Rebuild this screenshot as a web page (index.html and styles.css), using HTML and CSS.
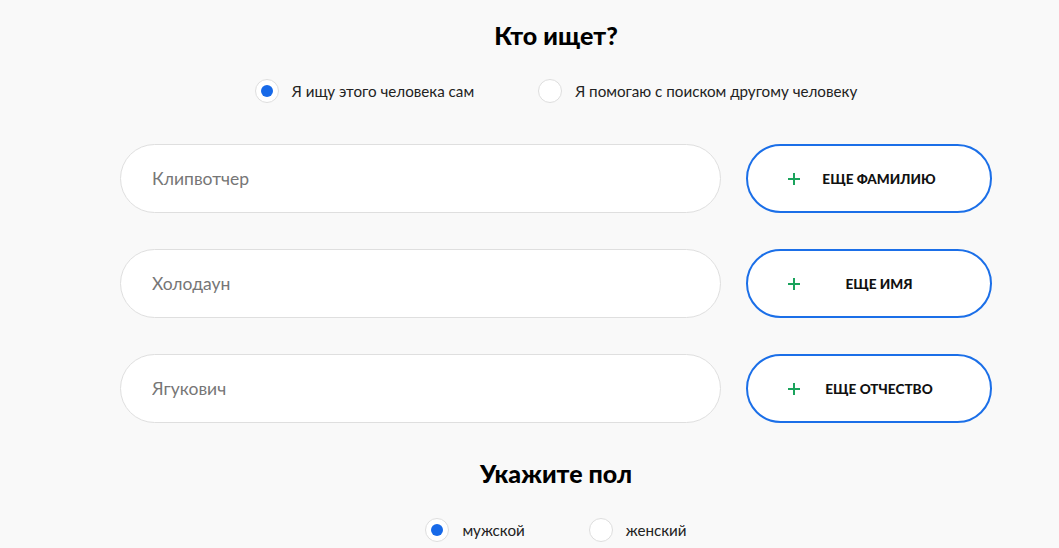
FILE: index.html
```html
<!DOCTYPE html>
<html lang="ru">

<head>
  <meta charset="UTF-8">
  <title>Кто ищет?</title>
  <link rel="stylesheet" href="styles.css">
</head>

<body>

  <div class="form">
    <h2 class="form-title">Кто ищет?</h2>

    <div class="radio-row">
      <label class="radio">
        <span class="radio-mark checked"></span>
        <span>Я ищу этого человека сам</span>
      </label>
      <label class="radio">
        <span class="radio-mark"></span>
        <span>Я помогаю с поиском другому человеку</span>
      </label>
    </div>

    <div class="field-row">
      <input class="field" type="text" placeholder="Клипвотчер">
      <button class="add-btn">
        <svg class="plus" width="12" height="12" viewBox="0 0 12 12"><path d="M6 0v12M0 6h12" stroke="#1aa35c" stroke-width="2"/></svg>
        <span class="add-text">Еще фамилию</span>
      </button>
    </div>

    <div class="field-row">
      <input class="field" type="text" placeholder="Холодаун">
      <button class="add-btn">
        <svg class="plus" width="12" height="12" viewBox="0 0 12 12"><path d="M6 0v12M0 6h12" stroke="#1aa35c" stroke-width="2"/></svg>
        <span class="add-text">Еще имя</span>
      </button>
    </div>

    <div class="field-row">
      <input class="field" type="text" placeholder="Ягукович">
      <button class="add-btn">
        <svg class="plus" width="12" height="12" viewBox="0 0 12 12"><path d="M6 0v12M0 6h12" stroke="#1aa35c" stroke-width="2"/></svg>
        <span class="add-text">Еще отчество</span>
      </button>
    </div>

    <h2 class="form-title gender-title">Укажите пол</h2>

    <div class="radio-row gender-row">
      <label class="radio">
        <span class="radio-mark checked"></span>
        <span>мужской</span>
      </label>
      <label class="radio">
        <span class="radio-mark"></span>
        <span>женский</span>
      </label>
    </div>
  </div>

</body>

</html>
```

FILE: styles.css
```css
body {
  margin: 0;
  background-color: #f9f9f9;
  font-family: Lato, "Noto Sans", sans-serif;
  color: #111;
}

.form {
  width: 872px;
  margin-left: 120px;
  padding-top: 21px;
}

.form-title {
  margin: 0;
  text-align: center;
  font-size: 25px;
  font-weight: 900;
  line-height: 28px;
  color: #000;
}

.radio-row {
  display: flex;
  justify-content: center;
  gap: 64px;
  margin-top: 30px;
  margin-bottom: 41px;
}

.radio {
  display: flex;
  align-items: center;
  gap: 13px;
  font-size: 15.2px;
  color: #222;
  cursor: pointer;
}

.radio-mark {
  width: 24px;
  height: 24px;
  border: 1px solid #dedede;
  border-radius: 50%;
  background-color: #fff;
  box-sizing: border-box;
  display: flex;
  align-items: center;
  justify-content: center;
}

.radio-mark.checked::after {
  content: "";
  width: 12px;
  height: 12px;
  border-radius: 50%;
  background-color: #1769e8;
}

.field-row {
  display: flex;
  gap: 25px;
  margin-bottom: 36px;
}

.field {
  width: 601px;
  height: 69px;
  box-sizing: border-box;
  padding: 0 31px;
  border: 1px solid #dfdfdf;
  border-radius: 35px;
  background-color: #fff;
  font-family: inherit;
  font-size: 17.5px;
  outline: none;
}

.field::placeholder {
  color: #767676;
}

.add-btn {
  width: 246px;
  height: 69px;
  box-sizing: border-box;
  display: flex;
  align-items: center;
  padding: 0 32px 0 40px;
  border: 2px solid #1b6fe8;
  border-radius: 35px;
  background-color: #fff;
  font-family: inherit;
  cursor: pointer;
}

.plus {
  flex-shrink: 0;
}

.add-text {
  flex: 1;
  text-align: center;
  font-size: 13.6px;
  font-weight: 900;
  text-transform: uppercase;
  color: #111;
}

.gender-title {
  margin-top: 2px;
}

.gender-row {
  margin-top: 31px;
}
```
